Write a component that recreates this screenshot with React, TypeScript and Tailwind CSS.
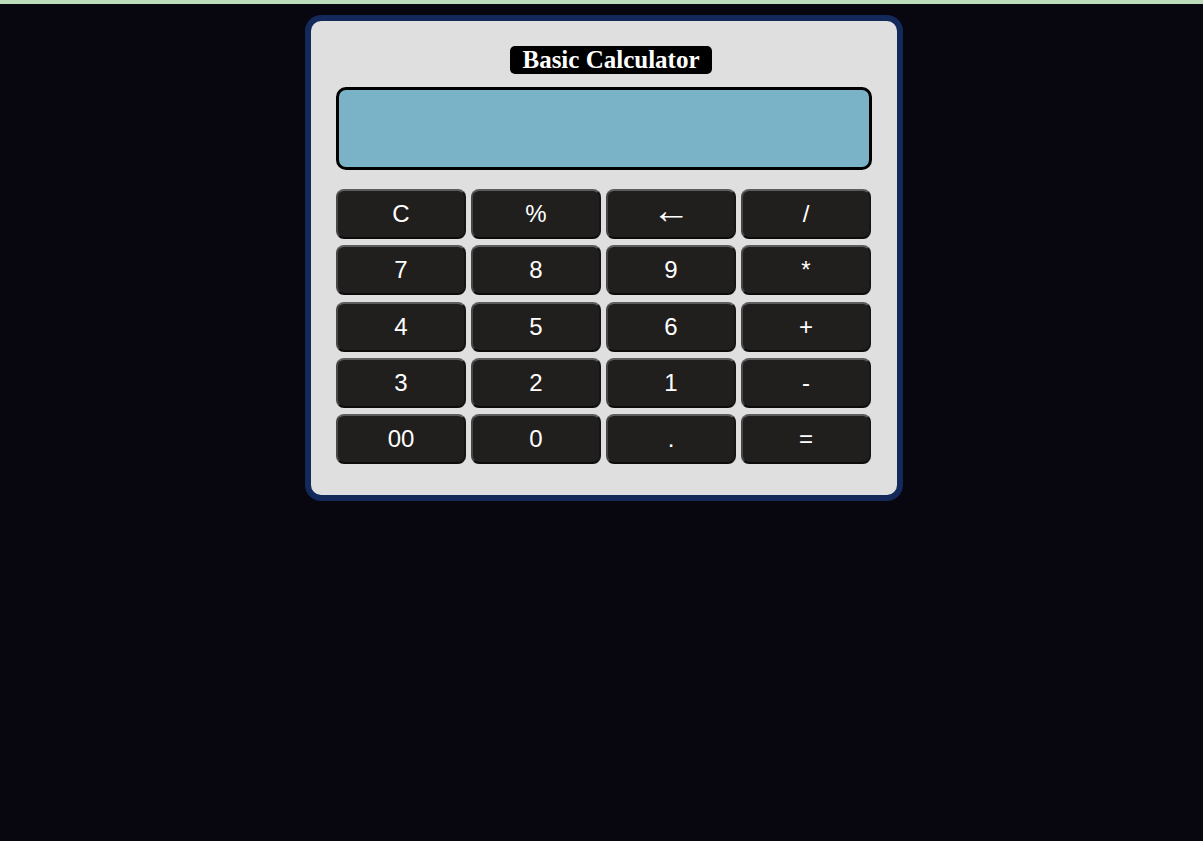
import React, { useState } from "react";

const keys = ["C", "%", "←", "/", "7", "8", "9", "*", "4", "5", "6", "+", "3", "2", "1", "-", "00", "0", ".", "="];

export default function App() {
  const [display, setDisplay] = useState("");

  const press = (k: string) => {
    if (k === "C") return setDisplay("");
    if (k === "←") return setDisplay((d) => d.slice(0, -1));
    if (k === "=") {
      try {
        // eslint-disable-next-line no-new-func
        setDisplay(String(Function(`return (${display || 0})`)()));
      } catch {
        setDisplay("Error");
      }
      return;
    }
    setDisplay((d) => d + k);
  };

  return (
    <div className="min-h-[841px] bg-[#08060f] font-['Liberation_Sans',Arial,sans-serif]">
      <div className="h-[4px] bg-[#bcdcbc]" />
      <div className="flex justify-center pt-[11px]">
        <div className="ml-[5px] w-[598px] rounded-[16px] border-[6px] border-[#13295a] bg-[#e0dfe0] px-[25px] pt-[25px] pb-[31px]">
          <div className="flex justify-center">
            <h1 className="ml-[14px] rounded-[5px] bg-black px-[12px] font-['Liberation_Serif','Times_New_Roman',serif] text-[25px] font-bold leading-[28px] text-white">
              Basic Calculator
            </h1>
          </div>
          <div className="mt-[13px] flex h-[83px] items-center justify-end overflow-hidden rounded-[10px] border-[3px] border-black bg-[#7ab3c7] px-4 text-[32px] text-black">
            {display}
          </div>
          <div className="mt-[19px] grid w-[535px] grid-cols-4 gap-x-[5px] gap-y-[6.25px]">
            {keys.map((k) => (
              <button
                key={k}
                onClick={() => press(k)}
                className={
                  k === "←"
                    ? "h-[50px] rounded-[8px] border-2 border-t-[#5c5c5c] border-l-[#474747] border-r-[#161616] border-b-[#0c0c0c] bg-[#211f1e] pb-[9px] text-[38px] leading-none text-white"
                    : "h-[50px] rounded-[8px] border-2 border-t-[#5c5c5c] border-l-[#474747] border-r-[#161616] border-b-[#0c0c0c] bg-[#211f1e] text-[24px] leading-none text-white"
                }
              >
                {k}
              </button>
            ))}
          </div>
        </div>
      </div>
    </div>
  );
}
